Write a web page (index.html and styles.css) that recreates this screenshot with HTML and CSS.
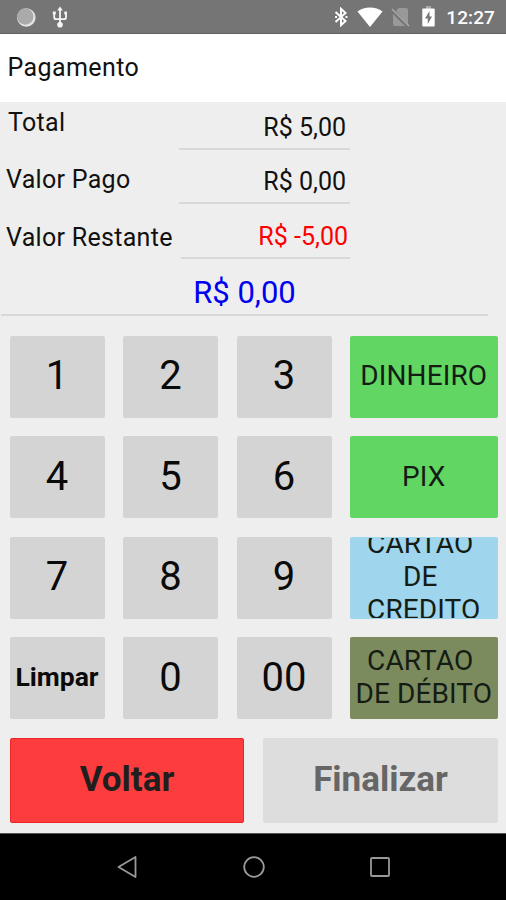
FILE: index.html
```html
<!DOCTYPE html>
<html lang="pt-BR">
<head>
    <meta charset="UTF-8">
    <meta name="viewport" content="width=device-width, initial-scale=1.0">
    <title>Pagamento</title>
    <link rel="stylesheet" href="styles.css">
</head>
<body>

    <div class="status-bar">
        <div class="status-left">
            <svg width="20" height="20" viewBox="0 0 20 20">
                <circle cx="10.3" cy="10.5" r="9.3" fill="#e4e4e4"/>
                <circle cx="9.3" cy="9.5" r="8.2" fill="#aaa"/>
            </svg>
            <svg class="usb" width="16" height="22" viewBox="0 0 16 22" fill="none" stroke="#f4f4f4" stroke-width="1.8">
                <path d="M8 4v14M2.200 7v4.200c0 1.400.8 2 2 2H12c1.200 0 2-.7 2-2V7"/>
                <path d="M8 .5 10.800 4.500H5.200zM.8 5.500h3v3h-3zM12.300 5.500h2.700v3h-2.700z" fill="#f4f4f4" stroke="none"/>
                <circle cx="8" cy="18.800" r="2.800" fill="#f4f4f4" stroke="none"/>
            </svg>
        </div>
        <div class="status-right">
            <svg class="bluetooth" width="14" height="20" viewBox="0 0 14 20" fill="none" stroke="#fff" stroke-width="2">
                <path d="M1.500 5 11.500 14 7 18.200V1.800L11.500 6 1.500 15"/>
                <path d="M1 10h2M11.500 10h2"/>
            </svg>
            <svg class="wifi" width="26" height="20" viewBox="0 0 26 20">
                <path d="M.5 4.500C7-.8 19-.8 25.500 4.500L13 20z" fill="#fff"/>
            </svg>
            <svg class="sim" width="19" height="20" viewBox="0 0 19 20">
                <path d="M7.500 1H15q2 0 2 2v14.500L5 4zM2 7l12 12H4q-2 0-2-2z" fill="#999"/>
                <path d="M1 2 18 19" stroke="#a8a8a8" stroke-width="1.600"/>
            </svg>
            <svg class="battery" width="13" height="21" viewBox="0 0 13 21">
                <path d="M4 0h5v3H4z" fill="#aaa"/>
                <rect x=".3" y="2.500" width="12.400" height="18" rx="1" fill="#fff"/>
                <path d="M7.500 5 3 12.500h2.800V18L10 10.500H7.500z" fill="#777"/>
            </svg>
            <span class="clock">12:27</span>
        </div>
    </div>

    <h1>Pagamento</h1>

    <div class="container">
        <div class="summary">
            <div class="labels">
                <div class="label total">Total</div>
                <div class="label">Valor Pago</div>
                <div class="label">Valor Restante</div>
            </div>
            <div class="values">
                <div class="value">R$ 5,00</div>
                <div class="value">R$ 0,00</div>
                <div class="value remaining">R$ -5,00</div>
            </div>
        </div>
        <div class="amount">R$ 0,00</div>

        <div class="keypad">
            <button>1</button>
            <button>2</button>
            <button>3</button>
            <button class="method cash">DINHEIRO</button>
            <button>4</button>
            <button>5</button>
            <button>6</button>
            <button class="method pix">PIX</button>
            <button>7</button>
            <button>8</button>
            <button>9</button>
            <button class="method credit">CARTAO&nbsp;<br>DE&nbsp;<br>CREDITO</button>
            <button class="clear">Limpar</button>
            <button>0</button>
            <button>00</button>
            <button class="method debit">CARTAO&nbsp;<br>DE DÉBITO</button>
        </div>

        <div class="actions">
            <button class="back">Voltar</button>
            <button class="finish" disabled>Finalizar</button>
        </div>
    </div>

    <div class="nav-bar">
        <svg width="22" height="24" viewBox="0 0 22 24" fill="none" stroke="#999" stroke-width="1.800" stroke-linejoin="round">
            <path d="M18.500 2v20L1.500 12z"/>
        </svg>
        <svg width="24" height="24" viewBox="0 0 24 24" fill="none" stroke="#999" stroke-width="1.800">
            <circle cx="12" cy="12" r="9.800"/>
        </svg>
        <svg width="22" height="24" viewBox="0 0 22 24" fill="none" stroke="#999" stroke-width="1.800">
            <rect x="2" y="3" width="18" height="18" rx="1"/>
        </svg>
    </div>

</body>
</html>
```
FILE: styles.css
```css
* {
    box-sizing: border-box;
    margin: 0;
    padding: 0;
}
body {
    width: 506px;
    height: 900px;
    font-family: Roboto, sans-serif;
    background-color: #eee;
    color: #111;
    display: flex;
    flex-direction: column;
    overflow: hidden;
}
svg {
    display: block;
    flex-shrink: 0;
}
.status-bar {
    height: 34px;
    background-color: #757575;
    border-bottom: 1px solid #606060;
    display: flex;
    justify-content: space-between;
    padding: 0 11px 0 16px;
}
.status-left, .status-right {
    display: flex;
    align-items: center;
}
.usb {
    margin-left: 16px;
}
.wifi {
    margin-left: 9px;
}
.sim {
    margin-left: 8px;
}
.battery {
    margin-left: 12px;
}
.clock {
    margin-left: 11px;
    color: #fff;
    font-size: 19px;
    font-weight: 500;
    line-height: 34px;
    letter-spacing: 0.1px;
    padding-top: 3px;
}
h1 {
    height: 67.5px;
    padding-left: 7.5px;
    background-color: #fff;
    font-size: 25px;
    font-weight: 400;
    line-height: 68px;
    letter-spacing: 0.4px;
}
.container {
    flex: 1;
}
.summary {
    display: flex;
    height: 157.500px;
}
.labels {
    width: 179px;
    padding: 6px 0 0 6px;
}
.label {
    height: 57.500px;
    font-size: 25px;
    line-height: 30px;
    letter-spacing: 0.3px;
    white-space: nowrap;
}
.total {
    padding-left: 2px;
}
.values {
    width: 171px;
}
.value {
    height: 54.500px;
    display: flex;
    justify-content: flex-end;
    align-items: flex-end;
    padding: 0 4px 5px 0;
    border-bottom: 2px solid #d8d8d8;
    font-size: 25px;
    line-height: 30px;
}
.value:first-child {
    height: 48px;
}
.remaining {
    margin-left: 2px;
    padding-right: 2px;
    color: #f00;
}
.amount {
    height: 56.500px;
    margin: 0 18px 0 1px;
    padding-top: 15px;
    border-bottom: 2px solid #d8d8d8;
    color: #0000f0;
    font-size: 31px;
    line-height: 38px;
    text-align: center;
}
.keypad {
    display: grid;
    grid-template-columns: 95px 95px 95px 148px;
    grid-auto-rows: 82px;
    gap: 18.500px;
    padding: 20.300px 0 0 9.500px;
}
button {
    border: none;
    border-radius: 2px;
    background-color: #d4d4d4;
    color: #0a0a0a;
    font-family: inherit;
    font-size: 40px;
    padding-bottom: 2px;
    overflow: hidden;
}
.method {
    display: flex;
    justify-content: center;
    align-items: center;
    border: 1px solid transparent;
    padding-bottom: 2px;
    margin-left: -0.500px;
    font-size: 28px;
    line-height: 33px;
    letter-spacing: 0.1px;
    color: #141c14;
}
.cash, .pix {
    background-color: #61d663;
}
.credit {
    background-color: #9fd5ed;
}
.debit {
    background-color: #7b8b5e;
}
.clear {
    padding-bottom: 4px;
    font-size: 26.500px;
    font-weight: 700;
}
.actions {
    display: grid;
    grid-template-columns: 234px 235px;
    gap: 19px;
    padding: 18.500px 0 0 10px;
}
.actions button {
    height: 85.500px;
    padding-bottom: 3px;
    font-size: 35px;
    font-weight: 700;
}
.actions .back {
    background-color: #fd3c3e;
    border: 1px solid #ee2528;
    color: #1f1f1f;
}
.actions .finish {
    background-color: #ddd;
    color: #666;
}
.nav-bar {
    height: 67px;
    background-color: #000;
    border-top: 1px solid #555;
    display: flex;
    justify-content: center;
    align-items: center;
    gap: 103px;
    padding-left: 1px;
}
```
